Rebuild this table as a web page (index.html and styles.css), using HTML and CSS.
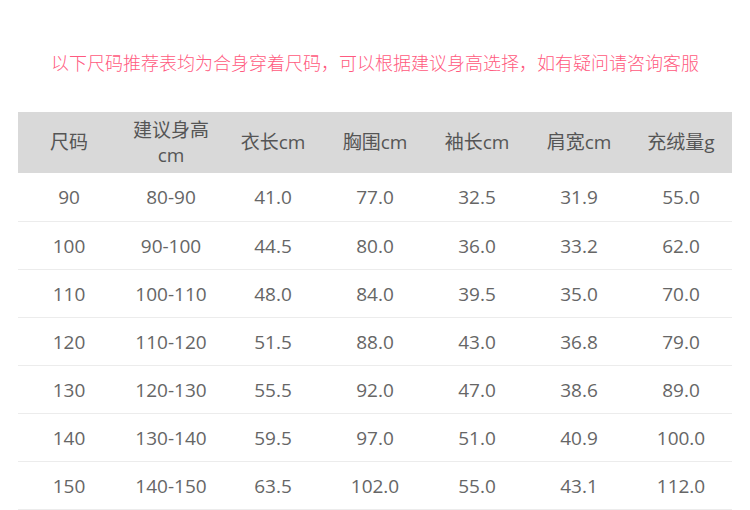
FILE: index.html
```html
<!DOCTYPE html>
<html lang="zh">
<head>
<meta charset="utf-8">
<link rel="stylesheet" href="styles.css">
</head>
<body>
<div class="page">
  <p class="notice">以下尺码推荐表均为合身穿着尺码，可以根据建议身高选择，如有疑问请咨询客服</p>
  <table class="size-table">
    <thead>
      <tr><th>尺码</th><th>建议身高<br>cm</th><th>衣长cm</th><th>胸围cm</th><th>袖长cm</th><th>肩宽cm</th><th>充绒量g</th></tr>
    </thead>
    <tbody>
      <tr><td>90</td><td>80-90</td><td>41.0</td><td>77.0</td><td>32.5</td><td>31.9</td><td>55.0</td></tr>
      <tr><td>100</td><td>90-100</td><td>44.5</td><td>80.0</td><td>36.0</td><td>33.2</td><td>62.0</td></tr>
      <tr><td>110</td><td>100-110</td><td>48.0</td><td>84.0</td><td>39.5</td><td>35.0</td><td>70.0</td></tr>
      <tr><td>120</td><td>110-120</td><td>51.5</td><td>88.0</td><td>43.0</td><td>36.8</td><td>79.0</td></tr>
      <tr><td>130</td><td>120-130</td><td>55.5</td><td>92.0</td><td>47.0</td><td>38.6</td><td>89.0</td></tr>
      <tr><td>140</td><td>130-140</td><td>59.5</td><td>97.0</td><td>51.0</td><td>40.9</td><td>100.0</td></tr>
      <tr><td>150</td><td>140-150</td><td>63.5</td><td>102.0</td><td>55.0</td><td>43.1</td><td>112.0</td></tr>
    </tbody>
  </table>
</div>
</body>
</html>
```
FILE: styles.css
```css
html, body {
  margin: 0;
  padding: 0;
  background: #fff;
}
body {
  font-family: "Open Sans", "Noto Sans CJK SC", sans-serif;
  color: #666;
}
.page {
  padding: 0 18px;
}
.notice {
  margin: 0;
  padding-top: 49px;
  height: 112px;
  line-height: 26px;
  box-sizing: border-box;
  text-align: center;
  font-size: 18px;
  color: #ff5a80;
  font-family: "Noto Sans CJK SC", sans-serif;
  font-weight: 300;
}
.size-table {
  width: 714px;
  border-collapse: collapse;
  table-layout: fixed;
}
.size-table th {
  background: #d9d9d9;
  height: 61px;
  padding: 0;
  font-weight: 400;
  font-size: 19px;
  line-height: 25px;
  color: #555;
}
.size-table td {
  height: 47px;
  padding: 0;
  text-align: center;
  font-size: 19px;
  color: #666;
  border-bottom: 1px solid #ececec;
}
.size-table tbody tr:first-child td {
  height: 48px;
}
```
